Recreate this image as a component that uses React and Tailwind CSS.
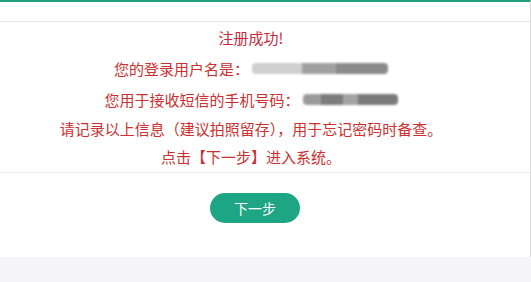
export default function App() {
  const font = { fontFamily: '"Noto Sans CJK SC", "Noto Sans", sans-serif' };
  return (
    <div className="w-[531px] h-[282px] bg-[#f5f4f7] overflow-hidden" style={font}>
      <div className="w-[531px] bg-white border-t-2 border-[#20a07e] border-r border-r-[#d9d9d9]">
        <div className="h-[20px] border-b border-[#e8e8e8]"></div>
        <div className="pr-[28px] pt-[1px] pb-[1px] flex flex-col items-center text-[15px] text-[#cc3030]">
          <div className="h-[30px] leading-[30px] text-[#c8283c]">注册成功!</div>
          <div className="h-[31px] flex items-center">
            <span className="leading-[31px]">您的登录用户名是：</span>
            <div className="ml-[3px] flex h-[11px] w-[136px] blur-[1px] rounded-sm overflow-hidden">
              <div className="w-[50px] bg-[#cfcfcf]"></div>
              <div className="w-[34px] bg-[#a0a0a0]"></div>
              <div className="w-[52px] bg-[#8a8a8a]"></div>
            </div>
          </div>
          <div className="h-[31px] flex items-center">
            <span className="leading-[31px]">您用于接收短信的手机号码：</span>
            <div className="ml-[3px] flex h-[11px] w-[95px] blur-[1px] rounded-sm overflow-hidden">
              <div className="w-[18px] bg-[#9a9a9a]"></div>
              <div className="w-[22px] bg-[#7c7c7c]"></div>
              <div className="w-[15px] bg-[#a3a3a3]"></div>
              <div className="w-[40px] bg-[#7a7a7a]"></div>
            </div>
          </div>
          <div className="h-[28px] leading-[28px]">请记录以上信息（建议拍照留存），用于忘记密码时备查。</div>
          <div className="h-[28px] leading-[28px]">点击【下一步】进入系统。</div>
        </div>
        <div className="border-t border-[#ebebeb] h-[85px] flex justify-center pt-[20px] pr-[20px]">
          <button className="w-[90px] h-[30px] rounded-full bg-[#1ea583] text-white text-[14px] leading-[30px]" style={font}>下一步</button>
        </div>
      </div>
    </div>
  );
}
